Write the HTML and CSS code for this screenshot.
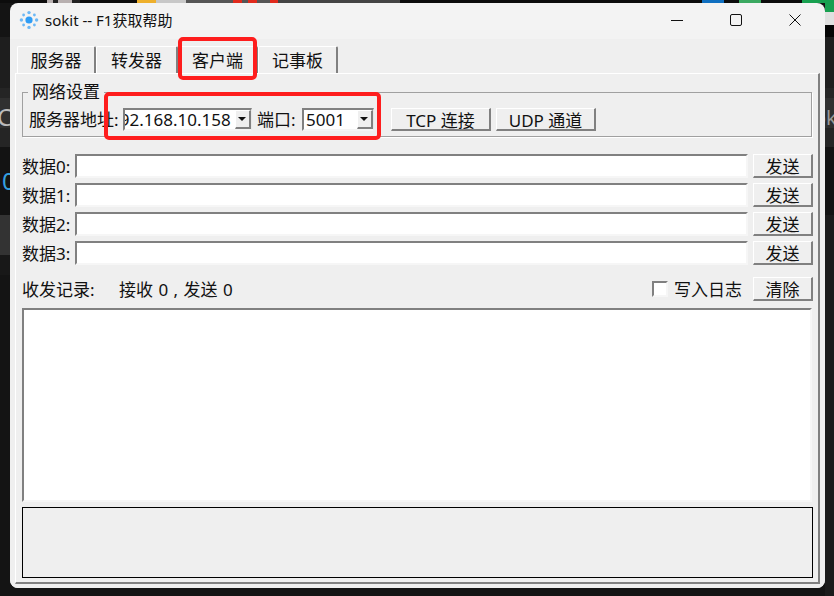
FILE: index.html
```html
<!DOCTYPE html>
<html lang="zh-CN">
<head>
<meta charset="utf-8">
<title>sokit</title>
<link rel="stylesheet" href="styles.css">
</head>
<body>
<div class="desktop">
  <span class="bg-text bg-c">C</span>
  <span class="bg-text bg-zero">0</span>
  <span class="bg-text bg-ok">ok</span>
  <div class="window">
    <header class="titlebar">
      <svg class="app-icon" width="20" height="20" viewBox="0 0 20 20">
        <circle cx="10" cy="10" r="3.6" fill="#2f9df5"/>
        <g fill="#6cb8f5">
          <circle cx="10" cy="2.6" r="1.7"/><circle cx="15.4" cy="5" r="1.4"/><circle cx="17.6" cy="10" r="1.7"/><circle cx="15.4" cy="15" r="1.4"/>
          <circle cx="10" cy="17.4" r="1.7"/><circle cx="4.6" cy="15" r="1.4"/><circle cx="2.4" cy="10" r="1.7"/><circle cx="4.6" cy="5" r="1.4"/>
        </g>
      </svg>
      <span class="title-text">sokit -- F1获取帮助</span>
      <div class="controls">
        <svg class="ctl" width="12" height="12" viewBox="0 0 12 12"><path d="M0 6.5H12" stroke="#111" fill="none"/></svg>
        <svg class="ctl" width="12" height="12" viewBox="0 0 12 12"><rect x=".5" y=".5" width="11" height="11" rx="1.5" stroke="#111" fill="none"/></svg>
        <svg class="ctl" width="12" height="12" viewBox="0 0 12 12"><path d="M.5.5L11.5 11.5M11.5.5L.5 11.5" stroke="#111" fill="none"/></svg>
      </div>
    </header>
    <div class="body">
      <nav class="tabs">
        <div class="tab tab-first">服务器</div>
        <div class="tab tab-second">转发器</div>
        <div class="tab active">客户端</div>
        <div class="tab">记事板</div>
      </nav>
      <section class="pane">
        <fieldset class="group">
          <legend>网络设置</legend>
          <div class="net-row">
            <label class="server-label">服务器地址:</label>
            <div class="combo combo-ip"><span class="combo-text ip-text">192.168.10.158</span><span class="arrow"></span></div>
            <label class="port-label">端口:</label>
            <div class="combo combo-port"><span class="combo-text">5001</span><span class="arrow"></span></div>
            <button class="btn btn-net btn-tcp">TCP 连接</button>
            <button class="btn btn-net">UDP 通道</button>
          </div>
        </fieldset>
        <div class="data-rows">
          <div class="data-row"><label>数据0:</label><div class="input"></div><button class="btn btn-send">发送</button></div>
          <div class="data-row"><label>数据1:</label><div class="input"></div><button class="btn btn-send">发送</button></div>
          <div class="data-row"><label>数据2:</label><div class="input"></div><button class="btn btn-send">发送</button></div>
          <div class="data-row"><label>数据3:</label><div class="input"></div><button class="btn btn-send">发送</button></div>
        </div>
        <div class="log-head">
          <span class="log-title">收发记录:</span>
          <span class="log-count">接收 0 , 发送 0</span>
          <span class="check"></span>
          <span class="check-label">写入日志</span>
          <button class="btn btn-send">清除</button>
        </div>
        <div class="log"></div>
        <div class="status"></div>
      </section>
    </div>
  </div>
  <div class="mark mark-tab"></div>
  <div class="mark mark-net"></div>
</div>
</body>
</html>
```
FILE: styles.css
```css
* { box-sizing: border-box; }
html, body { margin: 0; padding: 0; }
body { width: 834px; height: 596px; overflow: hidden; background: #141414; }
.desktop {
  position: relative; width: 834px; height: 596px; overflow: hidden;
  font: 17px/23px "Noto Sans", "Noto Sans CJK SC", sans-serif; color: #111;
  background-color: #141414;
  background-image:
    linear-gradient(90deg, #0c0c0c 0 47px, #b8b0b0 47px 53px, #222 53px 58px, #b8b0b0 58px 72px, #222 72px 80px, #0c0c0c 80px 137px, #eeb02c 137px 156px, #c8c8c8 156px 186px, #555 186px 233px, #e02a1c 233px 242px, #555 242px 248px, #e02a1c 248px 257px, #555 257px 270px, #e02a1c 270px 278px, #444 278px 400px, #0c0c0c 400px 702px, #0f6fc0 702px 724px, #0c0c0c 724px 739px, #3aa860 739px 761px, #0c0c0c 761px 802px, #18a050 802px 834px),
    linear-gradient(180deg, #141414 0 37px, #1e1e1e 37px 88px, #252525 88px 98px, #303030 98px 128px, #252525 128px 147px, #131313 147px 215px, #333 215px 255px, #181818 255px 275px, #141414 275px),
    linear-gradient(180deg, #18a050 0 12px, #e0e0e0 12px 25px, #050505 25px 37px, #1e1e1e 37px 88px, #252525 88px 98px, #303030 98px 128px, #252525 128px 147px, #131313 147px 215px, #1b1b1b 215px);
  background-size: 100% 3px, 10px 100%, 9px 100%;
  background-position: 0 0, 0 0, 100% 0;
  background-repeat: no-repeat;
}
.bg-text { position: absolute; font-size: 24px; line-height: 30px; }
.bg-c { left: -3px; top: 102px; color: #bbb; }
.bg-zero { left: 2px; top: 166px; color: #35a0e0; }
.bg-ok { left: 814px; top: 103px; font-size: 20px; color: #999; }
.window { position: absolute; left: 10px; top: 3px; width: 815px; height: 585px; background: #f3f3f3; border-radius: 8px; overflow: hidden; display: flex; flex-direction: column; }
.titlebar { height: 36px; flex: none; display: flex; align-items: center; padding: 0 0 2px 9px; font-size: 15px; }
.app-icon { flex: none; }
.title-text { margin-left: 6px; }
.controls { margin-left: auto; display: flex; }
.ctl { width: 12px; margin-right: 47px; }
.ctl:last-child { margin-right: 24px; }
.body { flex: 1; background: #efefef; padding: 7px 5px 5px 5px; display: flex; flex-direction: column; }
.tabs { display: flex; height: 27px; padding-left: 2px; flex: none; }
.tab { width: 80px; height: 27px; border-top: 1px solid #fff; border-left: 1px solid #fff; border-right: 2px solid #808080; border-radius: 2px 2px 0 0; text-align: center; line-height: 28px; }
.tab-first { width: 79px; }
.tab-second { width: 82px; }
.pane { flex: 1; border-top: 1px solid #fff; border-left: 1px solid #fff; border-right: 2px solid #808080; border-bottom: 2px solid #808080; padding: 0 5px 4px 6px; display: flex; flex-direction: column; }
.group { margin: 8px 1px 0 0; padding: 0 0 0 6px; height: 55px; border: 1px solid #a0a0a0; box-shadow: 1px 1px 0 #fff; }
.group legend { margin-left: -1px; padding: 0 4px 0 4px; line-height: 20px; height: 20px; }
.net-row { display: flex; align-items: center; height: 23px; margin-top: 6px; }
.server-label { width: 94px; flex: none; white-space: nowrap; }
.combo { height: 23px; background: #fff; border: 2px solid; border-color: #808080 #e8e8e8 #f4f4f4 #808080; border-right-width: 1px; display: flex; align-items: center; overflow: hidden; position: relative; flex: none; }
.combo-ip { width: 129px; }
.combo-port { width: 72px; }
.combo-text { padding-left: 2px; white-space: nowrap; }
.ip-text { margin-left: -15px; padding-left: 0; }
.arrow { position: absolute; right: 0; top: 0; width: 16px; height: 19px; background: #efefef; border: 1px solid; border-color: #fff #808080 #808080 #fff; border-width: 1px 2px 2px 1px; }
.arrow::after { content: ""; position: absolute; left: 2px; top: 6px; border: 4px solid transparent; border-top: 4px solid #111; border-bottom: 0; }
.port-label { margin: 0 5px; white-space: nowrap; width: 40px; }
.btn { font: inherit; color: inherit; padding: 2px 0 0; background: #efefef; border: 2px solid; border-color: #fff #808080 #808080 #fff; border-width: 1px 2px 2px 1px; height: 24px; line-height: 20px; flex: none; }
.btn-net { width: 100px; height: 23px; margin-left: 5px; }
.btn-tcp { margin-left: 17px; }
.data-rows { margin-top: 17px; display: flex; flex-direction: column; gap: 5px; }
.data-row { display: flex; align-items: center; height: 24px; }
.data-row label { width: 53px; flex: none; white-space: nowrap; }
.input { width: 673px; height: 24px; flex: none; background: #fff; border: 2px solid; border-color: #808080 #f6f6f6 #f6f6f6 #808080; }
.btn-send { width: 60px; margin-left: auto; }
.log-head { display: flex; align-items: center; height: 24px; margin-top: 12px; }
.log-title { width: 97px; }
.log-count { white-space: nowrap; word-spacing: 1px; }
.check { margin-left: auto; width: 16px; height: 16px; background: #fff; border: 2px solid; border-color: #808080 #f6f6f6 #f6f6f6 #808080; }
.check-label { margin: 0 11px 0 6px; white-space: nowrap; }
.log-head .btn-send { margin-left: 0; }
.log { flex: none; height: 194px; margin-top: 7px; background: #fff; border: 2px solid; border-color: #808080 #f6f6f6 #f6f6f6 #808080; width: 790px; }
.status { flex: none; height: 71px; margin-top: 5px; border: 1px solid #000; width: 791px; }
.mark { position: absolute; border: 4px solid #fe1d1d; border-radius: 5px; }
.mark-tab { left: 178px; top: 37px; width: 79px; height: 43px; }
.mark-net { left: 104px; top: 92px; width: 277px; height: 48px; }
```
